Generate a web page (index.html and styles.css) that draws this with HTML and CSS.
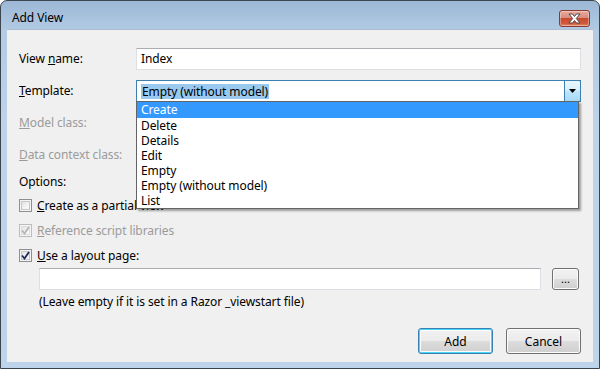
FILE: index.html
```html
<!DOCTYPE html>
<html>
<head>
<meta charset="utf-8">
<link rel="stylesheet" href="styles.css">
</head>
<body>
<div class="window">
  <div class="titlebar">
    <span class="title">Add View</span>
    <button class="close" aria-label="Close">
      <svg width="15" height="11" viewBox="0 0 15 11">
        <path d="M2 1 L5.5 1 L7.5 3.5 L9.5 1 L13 1 L9.3 5.5 L13 10 L9.5 10 L7.5 7.5 L5.5 10 L2 10 L5.7 5.5 Z" fill="#fff" stroke="#4a4a4a" stroke-width="1" stroke-linejoin="round"/>
      </svg>
    </button>
  </div>
  <div class="client">
    <div class="form">
      <label class="lbl">View <u>n</u>ame:</label>
      <div class="textbox"><span>Index</span></div>

      <label class="lbl"><u>T</u>emplate:</label>
      <div class="combo-wrap">
        <div class="combo">
          <span class="sel-text">Empty (without model)</span>
          <span class="drop-btn">
            <svg width="7" height="4" viewBox="0 0 7 4"><path d="M0 0 H7 L3.5 4 Z" fill="#000"/></svg>
          </span>
        </div>
        <ul class="droplist">
          <li class="hl">Create</li>
          <li>Delete</li>
          <li>Details</li>
          <li>Edit</li>
          <li>Empty</li>
          <li>Empty (without model)</li>
          <li>List</li>
        </ul>
      </div>

      <label class="lbl dis"><u>M</u>odel class:</label>
      <div></div>

      <label class="lbl dis"><u>D</u>ata context class:</label>
      <div></div>
    </div>

    <div class="options">Options:</div>
    <div class="check"><span class="box"></span><span><u>C</u>reate as a partial view</span></div>
    <div class="check dis"><span class="box checked"><svg width="9" height="9" viewBox="0 0 9 9"><path d="M1 4.5 L3.5 7.5 L8 1" fill="none" stroke="#b5b5b5" stroke-width="1.8"/></svg></span><span><u>R</u>eference script libraries</span></div>
    <div class="check"><span class="box checked"><svg width="9" height="9" viewBox="0 0 9 9"><path d="M1 4.5 L3.5 7.5 L8 1" fill="none" stroke="#1e2a5c" stroke-width="1.8"/></svg></span><span><u>U</u>se a layout page:</span></div>

    <div class="layout-row">
      <div class="textbox wide"></div>
      <button class="btn small">...</button>
    </div>
    <div class="hint">(Leave empty if it is set in a Razor _viewstart file)</div>

    <div class="actions">
      <button class="btn default">Add</button>
      <button class="btn">Cancel</button>
    </div>
  </div>
</div>
</body>
</html>
```
FILE: styles.css
```css
* { box-sizing: border-box; }
html, body { margin: 0; padding: 0; background: #fff; }
body { font-family: "Noto Sans", "Open Sans", sans-serif; font-size: 12px; color: #000; letter-spacing: -0.1px; }

.window {
  width: 600px;
  height: 369px;
  border: 1px solid #3a4550;
  border-radius: 7px 7px 0 0;
  background: linear-gradient(to bottom, #9cb8d6 0px, #b3cbe5 30px, #bcd3ea 120px, #bed4eb 369px);
  display: flex;
  flex-direction: column;
  overflow: hidden;
}
.titlebar {
  height: 28px;
  display: flex;
  align-items: flex-start;
  justify-content: space-between;
  padding: 0 9px 0 11px;
}
.title { font-size: 12px; line-height: 14px; margin-top: 10px; color: #000; }
.close {
  margin-top: 9px;
  width: 31px;
  height: 17px;
  border: 1px solid #8a3a33;
  border-radius: 3px;
  padding: 0;
  background: linear-gradient(to bottom, #e9a99c 0%, #d88d7e 45%, #c7492f 50%, #d25c3c 85%, #e3916f 100%);
  box-shadow: inset 0 0 0 1px rgba(255,255,255,0.35);
  display: flex;
  align-items: center;
  justify-content: center;
}
.close svg { display: block; }

.client {
  flex: 1;
  margin: 0 6px 6px 6px;
  background: #f0f0f0;
  padding: 13px 12px 0 12px;
  display: flex;
  flex-direction: column;
  border-top: 1px solid #a9bdd3;
}

.form {
  display: grid;
  grid-template-columns: 117px 1fr;
  grid-auto-rows: 32px;
  align-items: center;
}
.lbl { line-height: 16px; }
.dis { color: #9b9b9b; }

.textbox {
  height: 22px;
  background: #fff;
  border: 1px solid #dcdfe4;
  border-top-color: #abadb3;
  display: flex;
  align-items: center;
  padding-left: 4px;
}
.textbox span { line-height: 16px; }

.combo-wrap { position: relative; height: 22px; }
.combo {
  height: 22px;
  background: #fff;
  border: 1px solid #3c7fb1;
  display: flex;
  align-items: center;
  justify-content: space-between;
  padding-left: 4px;
}
.sel-text { background: #99c9ef; line-height: 15px; padding: 0 1px; }
.drop-btn {
  width: 17px;
  height: 22px;
  margin: -1px -1px -1px 0;
  border: 1px solid #3c7fb1;
  border-radius: 0 2px 2px 0;
  background: linear-gradient(to bottom, #eaf6fd 0%, #d9f0fc 45%, #bee6fd 50%, #a7d9f5 100%);
  display: flex;
  align-items: center;
  justify-content: center;
}
.droplist {
  position: absolute;
  left: 0;
  top: 21px;
  width: 443px;
  margin: 0;
  padding: 0;
  list-style: none;
  background: #fff;
  border: 1px solid #646464;
  box-shadow: 2px 2px 2px rgba(0,0,0,0.35);
  z-index: 5;
}
.droplist li { height: 15px; line-height: 15px; padding-left: 4px; }
.droplist li.hl { height: 16px; background: #3399ff; color: #fff; }

.options { line-height: 16px; height: 22px; display: flex; align-items: center; }
.check {
  display: flex;
  align-items: center;
  gap: 5px;
  height: 25px;
}
.check.dis { color: #9b9b9b; }
.box {
  width: 13px;
  height: 13px;
  border: 1px solid #8e8f8f;
  background: linear-gradient(135deg, #dcdcdc 0%, #f4f4f4 60%, #fff 100%);
  box-shadow: inset 0 0 0 1px #f4f4f4, inset 0 0 0 2px #c8c8c8;
  display: flex;
  align-items: center;
  justify-content: center;
}
.check.dis .box { border-color: #bcbcbc; box-shadow: inset 0 0 0 1px #f4f4f4, inset 0 0 0 2px #dedede; }
.box svg { display: block; }

.layout-row {
  display: flex;
  align-items: center;
  margin-left: 20px;
  margin-top: 0;
  gap: 11px;
}
.textbox.wide { width: 502px; }
.hint { margin-left: 20px; margin-top: 4px; line-height: 16px; }

.actions {
  display: flex;
  justify-content: flex-end;
  gap: 13px;
  margin-top: 18px;
}
.btn {
  font-family: inherit;
  font-size: 12px;
  color: #000;
  width: 75px;
  height: 26px;
  border: 1px solid #707070;
  border-radius: 3px;
  background: linear-gradient(to bottom, #f2f2f2 0%, #ebebeb 49%, #dddddd 50%, #cfcfcf 100%);
  box-shadow: inset 0 0 0 1px #fcfcfc;
  padding: 0;
}
.btn.small { width: 27px; height: 22px; font-size: 11px; line-height: 10px; }
.btn.default {
  border-color: #3c7fb1;
  box-shadow: inset 0 0 0 1px #48d6f7, inset 0 0 0 2px #fcfcfc;
}
```
